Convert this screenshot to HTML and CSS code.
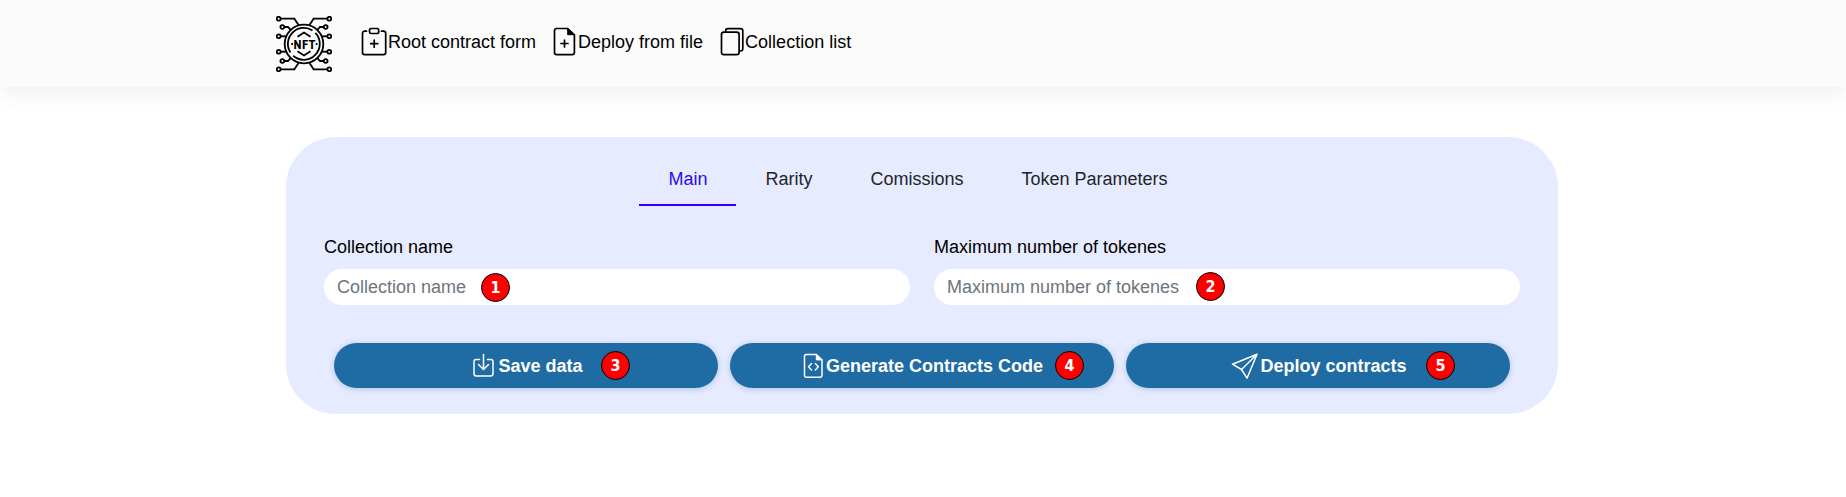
FILE: index.html
```html
<!DOCTYPE html>
<html lang="en">
<head>
<meta charset="utf-8">
<title>NFT collection</title>
<link rel="stylesheet" href="styles.css">
</head>
<body>
<header class="header">
  <div class="container header-row">
    <a class="logo" href="#" aria-label="Home">
      <svg width="56" height="56" viewBox="0 0 56 56" fill="none" stroke="#000" stroke-width="1.8">
        <defs>
          <g id="trace">
            <circle cx="2.7" cy="2.7" r="1.9"/><path d="M4.7 2.7H18.3L22.6 9"/>
            <circle cx="6.3" cy="11" r="1.9"/><path d="M8.3 11H12L15 14.4"/>
            <circle cx="2.7" cy="20.3" r="1.9"/><path d="M4.7 20.3H10.5"/>
          </g>
          <g id="traces">
            <use href="#trace"/>
            <use href="#trace" transform="matrix(1 0 0 -1 0 56)"/>
          </g>
        </defs>
        <use href="#traces"/>
        <use href="#traces" transform="matrix(-1 0 0 1 56 0)"/>
        <circle cx="28" cy="28" r="19.3"/>
        <path d="M36.5 14.4A16 16 0 0 0 14.4 36.5M17.2 39.8A16 16 0 0 0 39.4 16.8"/>
        <path d="M21.5 20.8L28 16.5L34.5 20.8M21.5 35.2L28 39.5L34.5 35.2"/>
        <path d="M15.300 28H17M39.800 28H41.400"/>
        <text class="logo-text" y="33" text-anchor="middle"><tspan x="21.500">N</tspan><tspan x="29">F</tspan><tspan x="36">T</tspan></text>
      </svg>
    </a>
    <nav class="nav">
      <a class="nav-link" href="#">
        <svg width="26" height="30" viewBox="0 0 26 30" fill="none" stroke="#000" stroke-width="1.7" stroke-linecap="round">
          <path d="M5.500 4.200H3.700Q1.500 4.200 1.500 6.400V25.400Q1.500 27.600 3.700 27.600H22.500Q24.700 27.600 24.700 25.400V6.400Q24.700 4.200 22.500 4.200H20.500"/>
          <rect x="8.500" y="1.500" width="9.200" height="5" rx="1.600"/>
          <path d="M13.200 13.200V20.200M9.700 16.700H16.700"/>
        </svg>Root contract form</a>
      <a class="nav-link" href="#">
        <svg width="24" height="30" viewBox="0 0 24 30" fill="none" stroke="#000" stroke-width="1.7" stroke-linecap="round" stroke-linejoin="round">
          <path d="M14.200 1.500H3.700Q1.500 1.500 1.500 3.700V25.400Q1.500 27.600 3.700 27.600H19.200Q21.400 27.600 21.400 25.400V8Z"/>
          <path d="M14.700 1.700V7.700H21.200Z" fill="#000" stroke-width="1"/>
          <path d="M11.500 13V20M8 16.500H15"/>
        </svg>Deploy from file</a>
      <a class="nav-link" href="#">
        <svg width="24" height="30" viewBox="0 0 24 30" fill="none" stroke="#000" stroke-width="1.7">
          <rect x="1.500" y="5.200" width="17.600" height="22.400" rx="2.400"/>
          <path d="M5.700 5V3.700Q5.700 1.600 7.800 1.600H20.700Q22.800 1.600 22.800 3.700V21.800Q22.800 24 20.700 24H19.300"/>
        </svg>Collection list</a>
    </nav>
  </div>
</header>
<main class="container">
  <form class="card">
    <nav class="tabs">
      <a class="tab tab-active" href="#">Main</a>
      <a class="tab" href="#">Rarity</a>
      <a class="tab" href="#">Comissions</a>
      <a class="tab" href="#">Token Parameters</a>
    </nav>
    <div class="fields">
      <div class="field">
        <label for="name">Collection name</label>
        <div class="control">
          <input id="name" type="text" placeholder="Collection name">
          <span class="badge badge-1">1</span>
        </div>
      </div>
      <div class="field">
        <label for="max">Maximum number of tokenes</label>
        <div class="control">
          <input id="max" type="text" placeholder="Maximum number of tokenes">
          <span class="badge badge-2">2</span>
        </div>
      </div>
    </div>
    <div class="actions">
      <button class="action" type="button">
        <svg width="26" height="26" viewBox="0 0 26 26" fill="none" stroke="#fff" stroke-width="1.500" stroke-linecap="round">
          <path d="M8.500 6.500H5.200Q3 6.500 3 8.700V20.700Q3 22.900 5.200 22.900H19.800Q22 22.900 22 20.700V8.700Q22 6.500 19.800 6.500H16.500"/>
          <path d="M12.500 1.500V16M7.500 11.500L12.500 16.500L17.500 11.500"/>
        </svg>Save data<span class="badge badge-3">3</span></button>
      <button class="action" type="button">
        <svg width="22" height="26" viewBox="0 0 22 26" fill="none" stroke="#fff" stroke-width="1.500" stroke-linecap="round" stroke-linejoin="round">
          <path d="M13 1.500H3.200Q1.500 1.500 1.500 3.200V22.500Q1.500 24.200 3.200 24.200H17.300Q19 24.200 19 22.500V7.300Z"/>
          <path d="M13.300 1.500V6.900H19Z" fill="#fff" stroke-width="1"/>
          <path d="M8.500 10.500L5.500 13.700L8.500 16.900M12.300 10.500L15.300 13.700L12.300 16.900"/>
        </svg>Generate Contracts Code<span class="badge badge-4">4</span></button>
      <button class="action" type="button">
        <svg width="28" height="26" viewBox="0 0 28 26" fill="none" stroke="#fff" stroke-width="1.500" stroke-linejoin="round">
          <path d="M26 1.200L1.500 11.200L10.500 16.500L16 25.200ZM10.500 16.500L26 1.200"/>
        </svg>Deploy contracts<span class="badge badge-5">5</span></button>
    </div>
  </form>
</main>
</body>
</html>
```
FILE: styles.css
```css
* { box-sizing: border-box; }

body {
  margin: 0;
  background: #fff;
  color: #000;
  font: 18px/28px "Liberation Sans", Arial, sans-serif;
}

a { color: inherit; text-decoration: none; }

.container {
  max-width: 1320px;
  margin: 0 auto;
  padding: 0 25px 0 23px;
}

.header {
  background: #fbfbfb;
  box-shadow: 0 8px 20px rgba(0, 0, 0, 0.06);
}

.header-row {
  display: flex;
  align-items: flex-start;
  gap: 29px;
  padding: 16px 13px 15px;
}

.logo svg { display: block; }

.logo-text {
  font: 700 13px "Liberation Sans Narrow", "Roboto Condensed", "Open Sans Condensed", Roboto, sans-serif;
  fill: #000;
  stroke: none;
}

.nav {
  display: flex;
  gap: 17px;
  padding-top: 10px;
}

.nav-link {
  display: flex;
  align-items: center;
  gap: 1px;
  height: 32px;
}

.card {
  margin-top: 50px;
  padding: 16px 38px 26px;
  background: #e7ebff;
  border-radius: 50px;
}

.tabs {
  display: flex;
  justify-content: center;
  padding-right: 8px;
}

.tab {
  padding: 12px 29px 11px;
  border-bottom: 2px solid transparent;
  color: #212529;
}

.tab-active {
  color: #2d0cee;
  border-color: #3300f5;
}

.fields {
  display: grid;
  grid-template-columns: 1fr 1fr;
  gap: 24px;
  padding-top: 27px;
}

.field label { display: block; }

.control {
  position: relative;
  margin-top: 8px;
}

.control input {
  display: block;
  width: 100%;
  height: 36px;
  padding: 0 13px;
  border: 0;
  border-radius: 18px;
  background: #fff;
  font: inherit;
}

.control input::placeholder {
  color: #6c757d;
  opacity: 1;
}

.actions {
  display: grid;
  grid-template-columns: repeat(3, 1fr);
  gap: 12px;
  padding: 38px 10px 0;
}

.action {
  position: relative;
  display: flex;
  align-items: center;
  justify-content: center;
  gap: 1px;
  height: 45px;
  padding: 0 0 0 2px;
  border: 0;
  border-radius: 23px;
  background: #1f6ba4;
  box-shadow: 0 1px 6px rgba(31, 107, 164, 0.3);
  color: #fff;
  font: inherit;
  font-weight: 700;
}

.badge {
  position: absolute;
  width: 29px;
  height: 29px;
  border: 1px solid #000;
  border-radius: 50%;
  background: #f00;
  color: #fff;
  font: 700 16px/27px "DejaVu Sans Condensed", "DejaVu Sans", sans-serif;
  text-align: center;
}

.badge-1 { top: 4px; left: 157px; }
.badge-2 { top: 3px; left: 262px; }
.badge-3 { top: 8px; left: calc(50% + 75px); }
.badge-4 { top: 8px; left: calc(50% + 133px); }
.badge-5 { top: 8px; left: calc(50% + 108px); }
```
